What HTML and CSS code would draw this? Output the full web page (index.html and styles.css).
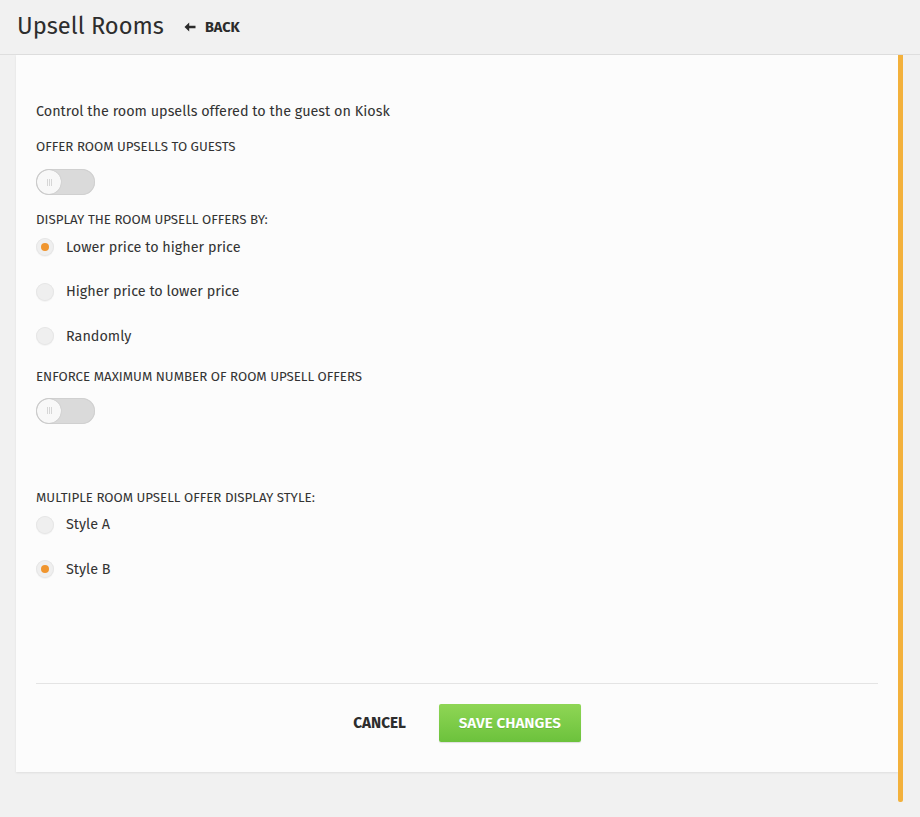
FILE: index.html
```html
<!DOCTYPE html>
<html>
<head>
<meta charset="utf-8">
<link rel="stylesheet" href="styles.css">
</head>
<body>
<div class="page">
  <header class="header">
    <h1 class="title">Upsell Rooms</h1>
    <a class="back"><svg class="back-icon" viewBox="0 0 12 10" width="12" height="10"><path d="M0.5 5 L5.2 0.6 L5.2 3.7 L11.5 3.7 L11.5 6.3 L5.2 6.3 L5.2 9.4 Z" fill="#2b2b2b"/></svg>BACK</a>
  </header>
  <div class="main">
    <section class="card">
      <div class="content">
        <p class="intro">Control the room upsells offered to the guest on Kiosk</p>
        <div class="label">OFFER ROOM UPSELLS TO GUESTS</div>
        <div class="toggle"><span class="knob"><i></i><i></i><i></i></span></div>
        <div class="label label-gap">DISPLAY THE ROOM UPSELL OFFERS BY:</div>
        <div class="radios">
          <div class="radio"><span class="dot on"></span>Lower price to higher price</div>
          <div class="radio"><span class="dot"></span>Higher price to lower price</div>
          <div class="radio"><span class="dot"></span>Randomly</div>
        </div>
        <div class="label label-enforce">ENFORCE MAXIMUM NUMBER OF ROOM UPSELL OFFERS</div>
        <div class="toggle toggle-2"><span class="knob"><i></i><i></i><i></i></span></div>
        <div class="label label-multi">MULTIPLE ROOM UPSELL OFFER DISPLAY STYLE:</div>
        <div class="radios">
          <div class="radio"><span class="dot"></span>Style A</div>
          <div class="radio"><span class="dot on"></span>Style B</div>
        </div>
      </div>
      <div class="footer">
        <button class="cancel">CANCEL</button>
        <button class="save">SAVE CHANGES</button>
      </div>
    </section>
    <div class="scrollbar"></div>
  </div>
</div>
</body>
</html>
```
FILE: styles.css
```css
html, body {
  margin: 0;
  padding: 0;
}
body {
  background: #f1f1f1;
  font-family: "Fira Sans", "Lato", "Open Sans", sans-serif;
  color: #333;
  width: 920px;
  height: 817px;
  overflow: hidden;
}
.header {
  border-bottom: 1px solid #dedede;
  display: flex;
  align-items: center;
  padding-left: 17px;
  box-sizing: border-box;
  height: 55px;
}
.title {
  margin: 0;
  font-weight: 400;
  font-size: 23.7px;
  color: #2d2d2d;
  position: relative;
  top: -1px;
}
.back {
  margin-left: 20px;
  display: flex;
  align-items: center;
  font-weight: 700;
  font-size: 14.5px;
  color: #2b2b2b;
}
.back-icon {
  margin-right: 9px;
}
.main {
  display: flex;
  align-items: flex-start;
  padding-left: 16px;
}
.card {
  width: 882px;
  height: 717px;
  background: #fcfcfc;
  box-shadow: 0 1px 2px rgba(0,0,0,0.08);
  display: flex;
  flex-direction: column;
  box-sizing: border-box;
  padding: 0 20px;
}
.scrollbar {
  width: 5px;
  height: 747px;
  background: #f3b13c;
  border-radius: 0 0 2px 2px;
}
.content {
  flex: 1;
  padding-top: 47px;
}
.intro {
  margin: 0;
  font-size: 14.4px;
  color: #333;
  line-height: 20px;
}
.label {
  font-size: 13.3px;
  color: #333;
  line-height: 16px;
  margin-top: 17px;
}
.toggle {
  margin-top: 14px;
  width: 59px;
  height: 26px;
  border-radius: 13px;
  background: #dadada;
  box-shadow: inset 0 0 0 1px #d0d0d0;
  position: relative;
}
.toggle-2 {
  margin-top: 13px;
}
.knob {
  position: absolute;
  left: 1px;
  top: 1px;
  width: 24px;
  height: 24px;
  border-radius: 50%;
  background: #f8f8f8;
  box-shadow: 0 0 1px rgba(0,0,0,0.25);
  display: flex;
  align-items: center;
  justify-content: center;
  gap: 1px;
}
.knob i {
  display: block;
  width: 1px;
  height: 7px;
  background: #d6d6d6;
}
.radios {
  margin-top: -3px;
}
.radio {
  display: flex;
  align-items: center;
  height: 44.5px;
  font-size: 14.4px;
  color: #333;
}
.dot {
  width: 18px;
  height: 18px;
  border-radius: 50%;
  background: #efefef;
  box-shadow: 0 0 0 1px #e6e6e6 inset, 0 1px 1px rgba(0,0,0,0.04);
  margin-right: 12px;
  display: flex;
  align-items: center;
  justify-content: center;
}
.dot.on::after {
  content: "";
  width: 8px;
  height: 8px;
  border-radius: 50%;
  background: #f0952e;
}
.label-enforce {
  margin-top: 10px;
}
.label-multi {
  margin-top: 66px;
}
.footer {
  border-top: 1px solid #e4e4e4;
  height: 89px;
  display: flex;
  justify-content: center;
  align-items: flex-start;
  padding-top: 20px;
  box-sizing: border-box;
  gap: 33px;
}
.cancel {
  font-family: inherit;
  background: none;
  border: none;
  font-weight: 700;
  font-size: 15.3px;
  color: #2d2d2d;
  height: 38px;
  padding: 0;
  margin-left: 20px;
}
.save {
  font-family: inherit;
  border: none;
  border-radius: 2px;
  width: 142px;
  height: 38px;
  background: linear-gradient(#8fd655, #6cc23c);
  color: #fff;
  font-size: 15.3px;
  font-weight: 600;
  box-shadow: 0 1px 1px rgba(0,0,0,0.12);
  text-shadow: 0 1px 0 rgba(0,0,0,0.1);
}
```
